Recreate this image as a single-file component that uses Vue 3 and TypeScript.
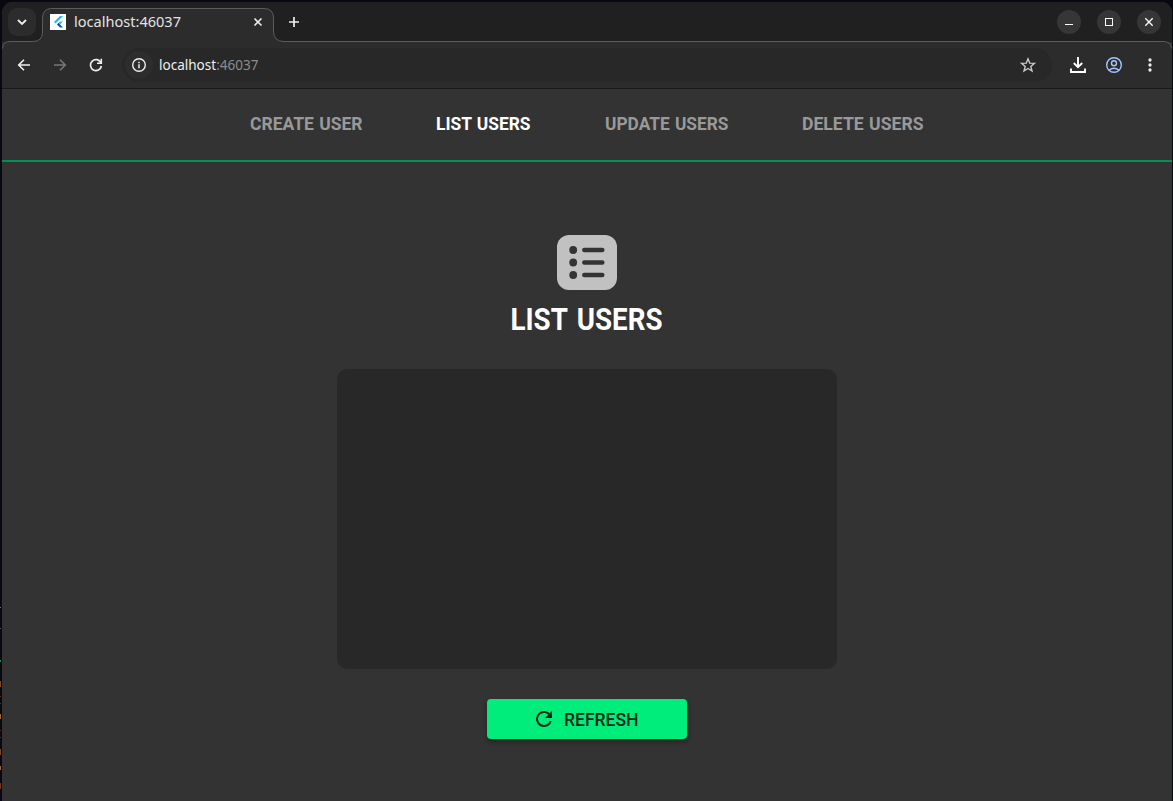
<script setup lang="ts">
import { ref } from 'vue'

interface NavItem { label: string; width: number; slot: number }

const address = { host: 'localhost', port: ':46037' }
const active = ref('LIST USERS')
const items: NavItem[] = [
  { label: 'CREATE USER', width: 112.5, slot: 186 },
  { label: 'LIST USERS', width: 94.5, slot: 169 },
  { label: 'UPDATE USERS', width: 123.5, slot: 197 },
  { label: 'DELETE USERS', width: 121.5, slot: 124 },
]
const specks = [
  { y: 607, h: 1, c: '#a06080' }, { y: 628, h: 1, c: '#555566' }, { y: 660, h: 2, c: '#00a050' },
  { y: 681, h: 6, c: '#86451c' }, { y: 696, h: 1, c: '#6d2818' }, { y: 703, h: 1, c: '#6d2818' },
  { y: 714, h: 5, c: '#a8682c' }, { y: 730, h: 1, c: '#6d2818' }, { y: 737, h: 1, c: '#6d2818' },
  { y: 749, h: 6, c: '#86451c' }, { y: 766, h: 4, c: '#a8682c' }, { y: 783, h: 6, c: '#7c3518' },
]
</script>

<template>
  <div class="desktop">
    <svg class="edge" width="2" height="801">
      <rect v-for="s in specks" :key="s.y" x="0" :y="s.y" width="1" :height="s.h" :fill="s.c" />
    </svg>
    <div class="window">
      <header class="tabstrip">
        <svg class="outline" width="1170" height="50" viewBox="2 2 1170 50">
          <path d="M2 52V48.5Q3 41.5 10 41.5H33Q42.5 41.5 42.5 32V18Q42.5 8.5 52 8.5H264Q273.5 8.5 273.5 18V31Q273.5 41.5 284 41.5H1163Q1171 41.5 1172 48.5V52Z" fill="#2c2c2c" />
          <path d="M2.5 48.5Q3 41.5 10 41.5H33Q42.5 41.5 42.5 32V18Q42.5 8.5 52 8.5H264Q273.5 8.5 273.5 18V31Q273.5 41.5 284 41.5H1163Q1171 41.5 1171.5 48.5" fill="none" stroke="#5c5c5c" />
        </svg>
        <button class="search" aria-label="Search tabs">
          <svg width="28" height="28"><path d="M10 12 14 16l4-4" fill="none" stroke="#eee" stroke-width="1.8" /></svg>
        </button>
        <div class="tab">
          <svg class="favicon" width="16" height="16">
            <rect width="16" height="16" fill="#fff" />
            <path d="M4 8 10 2h3L5.5 9.5z" fill="#21b8f5" />
            <path d="M7 10.5 10 7.5h3L8.5 12z" fill="#30b8f0" />
            <path d="M7 10.5 8.5 9 13 13.5h-3z" fill="#07589c" />
          </svg>
          <svg class="tab-title" width="108" height="20"><text x="0" y="15" textLength="107" lengthAdjust="spacingAndGlyphs">{{ address.host }}{{ address.port }}</text></svg>
          <svg class="tab-close" width="16" height="16"><path d="m4.5 4.5 7 7m0-7-7 7" stroke="#eee" stroke-width="1.6" /></svg>
        </div>
        <svg class="plus" width="16" height="16"><path d="M8 3v10M3 8h10" stroke="#eee" stroke-width="1.7" /></svg>
        <div class="controls">
          <button aria-label="Minimize"><svg width="24" height="24"><path d="M8 14.5h8" stroke="#fff" /></svg></button>
          <button aria-label="Maximize"><svg width="24" height="24"><rect x="8.5" y="8.5" width="7" height="7" fill="none" stroke="#fff" /></svg></button>
          <button aria-label="Close"><svg width="24" height="24"><path d="m8.300 8.300 7.400 7.400m0-7.400-7.400 7.400" stroke="#fff" stroke-width="1.300" /></svg></button>
        </div>
      </header>

      <div class="toolbar">
        <div class="history">
          <svg width="16" height="16"><path d="M14 8H3m5-5.300L2.700 8 8 13.300" fill="none" stroke="#eee" stroke-width="1.600" /></svg>
          <svg width="16" height="16"><path d="M2 8h11M8 2.700 13.300 8 8 13.300" fill="none" stroke="#777" stroke-width="1.600" /></svg>
          <svg width="16" height="16"><path d="M13 5.800A5.500 5.500 0 1 0 13.400 9" fill="none" stroke="#eee" stroke-width="1.700" /><path d="M14.100 1.800V7H9V5.400h3.500V1.800z" fill="#eee" /></svg>
        </div>
        <div class="omnibox">
          <span class="info"><svg width="16" height="16"><circle cx="8" cy="8" r="6.300" fill="none" stroke="#eee" stroke-width="1.400" /><path d="M8 7.200v4M8 4.700v1.500" stroke="#eee" stroke-width="1.500" /></svg></span>
          <svg class="url" width="100" height="20"><text x="0" y="15" textLength="99.500" lengthAdjust="spacingAndGlyphs"><tspan fill="#eee">{{ address.host }}</tspan><tspan fill="#8c8c8c">{{ address.port }}</tspan></text></svg>
          <svg class="star" width="16" height="16"><path d="m8 1.800 1.700 4.300 4.700.3-3.600 3 1.200 4.600L8 11.500 4 14l1.200-4.600-3.600-3 4.700-.3z" fill="none" stroke="#c8c8c8" stroke-width="1.400" /></svg>
        </div>
        <div class="actions">
          <svg width="18" height="18"><path d="M9 1v10M4.800 7 9 11.200 13.200 7M2 12.500V16h14v-3.500" fill="none" stroke="#fff" stroke-width="1.900" /></svg>
          <svg width="18" height="18" fill="none" stroke="#a3c5ff" stroke-width="1.400"><circle cx="9" cy="9" r="7.300" /><circle cx="9" cy="7.300" r="2.500" /><path d="M4 14.200Q9 10.200 14 14.200" /></svg>
          <svg width="18" height="18" fill="#eee"><circle cx="9" cy="4" r="1.650" /><circle cx="9" cy="9" r="1.650" /><circle cx="9" cy="14" r="1.650" /></svg>
        </div>
      </div>

      <nav class="nav">
        <a v-for="item in items" :key="item.label" :class="{ active: item.label === active }" :style="{ width: item.slot + 'px' }" @click="active = item.label">
          <svg :width="item.width + 2" height="24"><text x="0" y="18" :textLength="item.width" lengthAdjust="spacingAndGlyphs">{{ item.label }}</text></svg>
        </a>
      </nav>

      <main class="content">
        <svg class="list-icon" width="60" height="55" viewBox="0 0 60 55">
          <rect width="60" height="55" rx="12" fill="#c1c1c1" />
          <g fill="#333" stroke="#333" stroke-linecap="round" stroke-width="4.700">
            <g v-for="y in [15, 27.5, 40]" :key="y"><circle cx="16.200" :cy="y" r="3.900" stroke="none" /><path :d="`M27.400 ${y}H45.200`" /></g>
          </g>
        </svg>
        <svg class="title" width="154" height="40"><text x="0.500" y="32" textLength="152" lengthAdjust="spacingAndGlyphs">LIST USERS</text></svg>
        <section class="panel"></section>
        <button class="refresh">
          <svg width="20" height="20" viewBox="2 2 20 20" fill="#002b16"><path d="M17.650 6.350C16.200 4.900 14.210 4 12 4a8 8 0 1 0 7.730 10h-2.080A6 6 0 1 1 12 6c1.660 0 3.140.690 4.220 1.780L13 11h7V4z" /></svg>
          <svg width="76" height="20"><text x="0" y="16.500" textLength="74.500" lengthAdjust="spacingAndGlyphs">REFRESH</text></svg>
        </button>
      </main>
    </div>
  </div>
</template>

<style>
body { margin: 0; overflow: hidden; background: #080812; }
</style>

<style scoped>
* { box-sizing: border-box; }
svg { display: block; flex: none; overflow: visible; }
button { border: 0; padding: 0; }
.desktop { position: relative; width: 1173px; height: 801px; padding: 2px 1px 0 2px; background: #080810; }
.edge { position: absolute; left: 0; top: 0; }
.window { height: 799px; display: flex; flex-direction: column; background: #333; border-radius: 11px 11px 0 0; overflow: hidden; }
.tabstrip { position: relative; height: 40px; flex: none; display: flex; align-items: center; background: #202020; padding-left: 6px; }
.outline { position: absolute; left: 0; top: 0; }
.tabstrip > :not(.outline) { position: relative; }
.search { width: 28px; height: 28px; border-radius: 9px; background: #2c2c2c; }
.tab { width: 232px; margin-left: 6px; padding: 0 8px; display: flex; align-items: center; }
.tab-title { margin-left: 8px; font: 14.5px "Noto Sans", sans-serif; fill: #e4e4e4; }
.tab-close { margin-left: auto; }
.plus { margin-left: 12px; }
.controls { margin-left: auto; margin-right: 11px; display: flex; gap: 16px; }
.controls button { width: 24px; height: 24px; border-radius: 50%; background: #363636; }
.toolbar { position: relative; height: 47px; flex: none; display: flex; align-items: center; background: linear-gradient(#2c2c2c, #2c2c2c) 0 8px no-repeat; border-bottom: 1px solid #191919; padding-left: 14px; }
.history { display: flex; gap: 20px; }
.omnibox { width: 930px; height: 34px; border-radius: 17px; background: #282828; margin-left: 18px; padding: 0 16px 0 3px; display: flex; align-items: center; }
.info { width: 28px; height: 28px; border-radius: 50%; display: grid; place-items: center; background: #2d2d2d; }
.url { margin-left: 6px; font: 14px "Noto Sans", sans-serif; }
.star { margin-left: auto; }
.actions { display: flex; gap: 18px; margin-left: 17px; }
.nav { height: 73px; flex: none; display: flex; padding: 23px 0 0 248px; border-bottom: 2px solid #009158; }
.nav a { flex: none; height: 24px; cursor: pointer; fill: #999; font: 700 18.5px Roboto, sans-serif; word-spacing: 1px; }
.nav a.active { fill: #fff; }
.content { flex: 1; display: flex; flex-direction: column; align-items: center; padding-top: 73px; }
.title { margin-top: 8px; font: 700 31px Roboto, sans-serif; word-spacing: 3px; fill: #fff; }
.panel { width: 500px; height: 300px; margin-top: 30.5px; border-radius: 10px; background: #282828; }
.refresh { width: 200px; height: 40px; margin-top: 30px; border-radius: 4px; background: #00ed7b; display: flex; align-items: center; padding-left: 47px; gap: 10px; box-shadow: 0 3px 5px #0005; font: 500 18.300px Roboto, sans-serif; fill: #002b16; }
</style>
